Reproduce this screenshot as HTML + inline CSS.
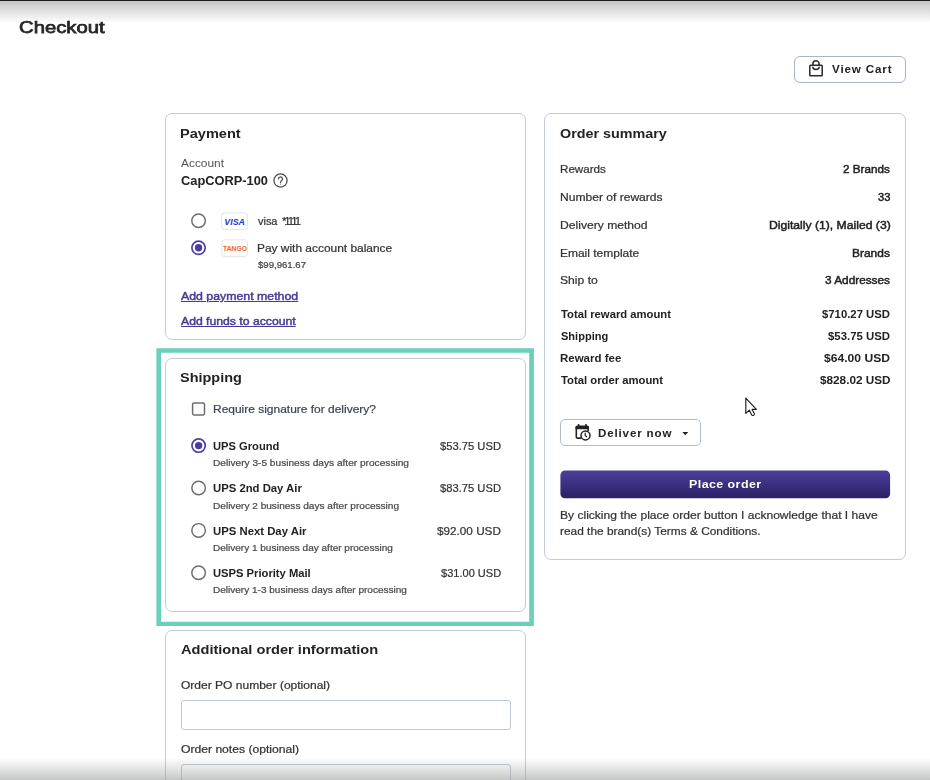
<!DOCTYPE html>
<html lang="en"><head><meta charset="utf-8"><title>Checkout</title>
<style>
*{box-sizing:border-box;margin:0;padding:0}
html,body{width:930px;height:780px;overflow:hidden;background:#fff}
body{position:relative;font-family:"Liberation Sans",sans-serif}
.t{position:absolute;white-space:nowrap;line-height:20px;transform-origin:0 0}
.a{position:absolute}
.card{position:absolute;border:1px solid #c4cbd6;border-radius:7px;background:#fff}
.inp{position:absolute;border:1px solid #c0c7d1;border-radius:3px;background:#fff}
</style></head>
<body>

<div class="a" style="left:0;top:0;width:930px;height:23px;background:linear-gradient(#c2c2c2,#fff)"></div>
<div class="a" style="left:0;top:0;width:930px;height:1px;background:#1c1c1c"></div>

<div class="a" style="left:794px;top:56px;width:112px;height:27px;border:1px solid #aab4c5;border-radius:6px;background:#fff"></div>
<svg class="a" style="left:808px;top:60px" width="16" height="17" viewBox="0 0 16 17" fill="none" stroke="#2a2a2a" stroke-width="1.5" stroke-linejoin="round" stroke-linecap="round"><path d="M2.6 5.3h10.8a.8.8 0 0 1 .8.8v8.9a.8.8 0 0 1-.8.8H2.6a.8.8 0 0 1-.8-.8V6.1a.8.8 0 0 1 .8-.8z"/><path d="M4.9 5.3V3.9a3.1 3.1 0 0 1 6.2 0v1.4"/><path d="M4.9 7.3a3.1 2.2 0 0 0 6.2 0"/></svg>

<div class="card" style="left:165px;top:113px;width:361px;height:227px"></div>
<svg class="a" style="left:272.7px;top:172.9px" width="15" height="15" viewBox="0 0 15 15" fill="none" stroke="#444" stroke-width="1.2"><circle cx="7.5" cy="7.5" r="6.6"/><path d="M5.5 6a2 2 0 1 1 3 1.7c-.7.4-1 .8-1 1.6" stroke-linecap="round"/><circle cx="7.5" cy="11" r=".5" fill="#444" stroke="none"/></svg>

<svg class="a" style="left:0;top:340px" width="930" height="300" viewBox="0 340 930 300"><path d="M156.4 348.2H533.9V626H156.4z M161 352.8V621.7H529.2V352.8z" fill="#6bd0ba" fill-rule="evenodd"/></svg>
<div class="card" style="left:165px;top:358px;width:361px;height:254px"></div>

<div class="card" style="left:165px;top:630px;width:361px;height:200px"></div>
<div class="inp" style="left:180.5px;top:700px;width:330px;height:29.5px"></div>
<div class="inp" style="left:180.5px;top:764px;width:330px;height:60px"></div>

<div class="card" style="left:544px;top:113px;width:362px;height:447px"></div>
<div class="a" style="left:560px;top:419px;width:141px;height:27px;border:1px solid #b2bccb;border-radius:5px;background:#fff"></div>
<svg class="a" style="left:575px;top:424px" width="17" height="18" viewBox="0 0 17 18" fill="none" stroke="#222" stroke-width="1.6" stroke-linecap="round" stroke-linejoin="round"><path d="M5.6 14.1H2.3a1 1 0 0 1-1-1V3.4a1 1 0 0 1 1-1h9.8a1 1 0 0 1 1 1v3"/><path d="M1.3 2.9h11.8v1.5H1.3z" fill="#222"/><path d="M3.6 0.7v2M11 0.7v2"/><circle cx="10.5" cy="11.4" r="4.5" fill="#fff" stroke-width="1.5"/><path d="M10.2 9v2.6l1.5 1.1" stroke-width="1.2"/></svg>
<svg class="a" style="left:682px;top:431.5px" width="7" height="4" viewBox="0 0 7 4"><path d="M0.3 0h6L3.3 3.2z" fill="#222"/></svg>
<svg class="a" style="left:555px;top:465px" width="340" height="40" viewBox="555 465 340 40"><defs><linearGradient id="pg" x1="0" y1="0" x2="0" y2="1"><stop offset="0" stop-color="#4b3f9c"/><stop offset="1" stop-color="#2a2064"/></linearGradient></defs><rect x="560.4" y="470.6" width="329.7" height="27.6" rx="4.5" fill="url(#pg)"/></svg>
<svg class="a" style="left:744px;top:396px" width="15" height="22" viewBox="0 0 15 22"><path d="M1.8 2.2V17.3l3.5-3.2 2.4 4.9q.5.8 1.4.4l.8-.4q.8-.5.4-1.400L8.100 13.400h4.300z" fill="#fff" stroke="#1d1d26" stroke-width="1.15" stroke-linejoin="round"/></svg>
<svg class="a" style="left:0;top:0" width="930" height="780" viewBox="0 0 930 780"><circle cx="198.55" cy="220.7" r="6.775" fill="#fff" stroke="#6b6b6b" stroke-width="1.45"/><circle cx="198.55" cy="247.8" r="6.65" fill="#fff" stroke="#4e43a0" stroke-width="1.7"/><circle cx="198.55" cy="247.8" r="3.7" fill="#4a3e9d"/><circle cx="198.6" cy="445.6" r="6.65" fill="#fff" stroke="#4e43a0" stroke-width="1.7"/><circle cx="198.6" cy="445.6" r="3.7" fill="#4a3e9d"/><circle cx="198.6" cy="488" r="6.775" fill="#fff" stroke="#6b6b6b" stroke-width="1.45"/><circle cx="198.6" cy="530.4" r="6.775" fill="#fff" stroke="#6b6b6b" stroke-width="1.45"/><circle cx="198.6" cy="572.7" r="6.775" fill="#fff" stroke="#6b6b6b" stroke-width="1.45"/><rect x="192.6" y="403" width="11.9" height="11.9" rx="1.3" fill="#fff" stroke="#6e6e6e" stroke-width="1.5"/><rect x="221.8" y="212.8" width="25.6" height="16.8" rx="2.8" fill="#fff" stroke="#e4e4e9" stroke-width="1"/><rect x="221.8" y="239.8" width="25.6" height="16.8" rx="2.8" fill="#fff" stroke="#e4e4e9" stroke-width="1"/><text x="224.3" y="224.8" font-family="Liberation Sans, sans-serif" font-size="9.6" font-weight="700" font-style="italic" fill="#1737cc" textLength="20.6" lengthAdjust="spacingAndGlyphs">VISA</text><text x="223" y="250.6" font-family="Liberation Sans, sans-serif" font-size="6.3" font-weight="700" fill="#f1632a" textLength="24" lengthAdjust="spacingAndGlyphs">TANGO</text></svg>
<div id="tx" style="position:absolute;left:0;top:0;width:930px;height:780px;will-change:transform">
<span class="t" style="left:18.58px;top:17.51px;font-size:17px;font-weight:400;color:#262626;transform:scaleX(1.1920);-webkit-text-stroke:0.75px #262626;">Checkout</span>
<span class="t" style="left:832.40px;top:59.19px;font-size:11px;font-weight:700;color:#222;letter-spacing:0.8px;transform:scaleX(1.0579);">View Cart</span>
<span class="t" style="left:180.03px;top:123.80px;font-size:13px;font-weight:700;color:#222;transform:scaleX(1.1200);">Payment</span>
<span class="t" style="left:181.00px;top:154.13px;font-size:10px;font-weight:400;color:#555;transform:scaleX(1.1898);-webkit-text-stroke:0;">Account</span>
<span class="t" style="left:181.00px;top:171.14px;font-size:12px;font-weight:700;color:#222;transform:scaleX(1.0691);">CapCORP-100</span>
<span class="t" style="left:258.00px;top:211.19px;font-size:11px;font-weight:400;color:#333;transform:scaleX(0.9917);-webkit-text-stroke:0.22px #333;">visa</span>
<span class="t" style="left:282.20px;top:211.19px;font-size:11px;font-weight:400;color:#333;letter-spacing:-2.0px;transform:scaleX(1.0391);-webkit-text-stroke:0.22px #333;">*1111</span>
<span class="t" style="left:257.34px;top:238.19px;font-size:11px;font-weight:400;color:#333;transform:scaleX(1.0839);-webkit-text-stroke:0.22px #333;">Pay with account balance</span>
<span class="t" style="left:258.00px;top:254.88px;font-size:9px;font-weight:400;color:#444;transform:scaleX(1.0656);-webkit-text-stroke:0.22px #444;">$99,961.67</span>
<span class="t" style="left:181.04px;top:286.39px;font-size:11px;font-weight:400;color:#463c96;transform:scaleX(1.1203);-webkit-text-stroke:0.45px #463c96;text-decoration:underline;text-decoration-thickness:1px;text-underline-offset:0.6px;">Add payment method</span>
<span class="t" style="left:181.22px;top:310.99px;font-size:11px;font-weight:400;color:#463c96;transform:scaleX(1.1096);-webkit-text-stroke:0.45px #463c96;text-decoration:underline;text-decoration-thickness:1px;text-underline-offset:0.6px;">Add funds to account</span>
<span class="t" style="left:180.13px;top:367.50px;font-size:13px;font-weight:700;color:#222;transform:scaleX(1.1127);">Shipping</span>
<span class="t" style="left:213.08px;top:399.19px;font-size:11px;font-weight:400;color:#3d4654;transform:scaleX(1.0875);-webkit-text-stroke:0.22px #3d4654;">Require signature for delivery?</span>
<span class="t" style="left:213.34px;top:436.19px;font-size:11px;font-weight:700;color:#222;transform:scaleX(1.0149);">UPS Ground</span>
<span class="t" style="left:440.00px;top:436.19px;font-size:11px;font-weight:400;color:#333;transform:scaleX(1.0177);-webkit-text-stroke:0.22px #333;">$53.75 USD</span>
<span class="t" style="left:213.20px;top:453.28px;font-size:9px;font-weight:400;color:#4a4a4a;transform:scaleX(1.1257);-webkit-text-stroke:0.22px #4a4a4a;">Delivery 3-5 business days after processing</span>
<span class="t" style="left:213.16px;top:477.52px;font-size:11px;font-weight:700;color:#222;transform:scaleX(1.0282);">UPS 2nd Day Air</span>
<span class="t" style="left:440.00px;top:477.52px;font-size:11px;font-weight:400;color:#333;transform:scaleX(1.0177);-webkit-text-stroke:0.22px #333;">$83.75 USD</span>
<span class="t" style="left:213.13px;top:495.61px;font-size:9px;font-weight:400;color:#4a4a4a;transform:scaleX(1.1204);-webkit-text-stroke:0.22px #4a4a4a;">Delivery 2 business days after processing</span>
<span class="t" style="left:213.28px;top:520.85px;font-size:11px;font-weight:700;color:#222;transform:scaleX(1.0304);">UPS Next Day Air</span>
<span class="t" style="left:437.24px;top:520.85px;font-size:11px;font-weight:400;color:#333;transform:scaleX(1.0663);-webkit-text-stroke:0.22px #333;">$92.00 USD</span>
<span class="t" style="left:213.41px;top:537.94px;font-size:9px;font-weight:400;color:#4a4a4a;transform:scaleX(1.1127);-webkit-text-stroke:0.22px #4a4a4a;">Delivery 1 business day after processing</span>
<span class="t" style="left:213.17px;top:563.18px;font-size:11px;font-weight:700;color:#222;transform:scaleX(1.0181);">USPS Priority Mail</span>
<span class="t" style="left:440.80px;top:563.18px;font-size:11px;font-weight:400;color:#333;transform:scaleX(1.0043);-webkit-text-stroke:0.22px #333;">$31.00 USD</span>
<span class="t" style="left:213.41px;top:580.27px;font-size:9px;font-weight:400;color:#4a4a4a;transform:scaleX(1.1138);-webkit-text-stroke:0.22px #4a4a4a;">Delivery 1-3 business days after processing</span>
<span class="t" style="left:181.00px;top:639.50px;font-size:13px;font-weight:700;color:#222;transform:scaleX(1.1236);">Additional order information</span>
<span class="t" style="left:181.00px;top:675.36px;font-size:10.5px;font-weight:400;color:#333;transform:scaleX(1.1449);-webkit-text-stroke:0.22px #333;">Order PO number (optional)</span>
<span class="t" style="left:181.00px;top:739.36px;font-size:10.5px;font-weight:400;color:#333;transform:scaleX(1.1553);-webkit-text-stroke:0.22px #333;">Order notes (optional)</span>
<span class="t" style="left:560.19px;top:123.80px;font-size:13px;font-weight:700;color:#222;transform:scaleX(1.1032);">Order summary</span>
<span class="t" style="left:560.12px;top:159.26px;font-size:10.8px;font-weight:400;color:#333;transform:scaleX(1.0774);-webkit-text-stroke:0.22px #333;">Rewards</span>
<span class="t" style="left:843.24px;top:159.19px;font-size:11px;font-weight:400;color:#222;transform:scaleX(1.0626);-webkit-text-stroke:0.45px #222;">2 Brands</span>
<span class="t" style="left:560.25px;top:187.11px;font-size:10.8px;font-weight:400;color:#333;transform:scaleX(1.1171);-webkit-text-stroke:0.22px #333;">Number of rewards</span>
<span class="t" style="left:877.60px;top:187.04px;font-size:11px;font-weight:400;color:#222;transform:scaleX(1.0122);-webkit-text-stroke:0.45px #222;">33</span>
<span class="t" style="left:560.24px;top:214.96px;font-size:10.8px;font-weight:400;color:#333;transform:scaleX(1.1226);-webkit-text-stroke:0.22px #333;">Delivery method</span>
<span class="t" style="left:768.69px;top:214.89px;font-size:11px;font-weight:400;color:#222;transform:scaleX(1.1063);-webkit-text-stroke:0.45px #222;">Digitally (1), Mailed (3)</span>
<span class="t" style="left:560.33px;top:242.81px;font-size:10.8px;font-weight:400;color:#333;transform:scaleX(1.1092);-webkit-text-stroke:0.22px #333;">Email template</span>
<span class="t" style="left:852.15px;top:242.74px;font-size:11px;font-weight:400;color:#222;transform:scaleX(1.0864);-webkit-text-stroke:0.45px #222;">Brands</span>
<span class="t" style="left:560.08px;top:269.66px;font-size:10.8px;font-weight:400;color:#333;transform:scaleX(1.1250);-webkit-text-stroke:0.22px #333;">Ship to</span>
<span class="t" style="left:825.00px;top:269.59px;font-size:11px;font-weight:400;color:#222;transform:scaleX(1.0735);-webkit-text-stroke:0.45px #222;">3 Addresses</span>
<span class="t" style="left:561.00px;top:303.76px;font-size:10.5px;font-weight:700;color:#222;transform:scaleX(1.0733);">Total reward amount</span>
<span class="t" style="left:822.24px;top:303.76px;font-size:10.5px;font-weight:700;color:#222;transform:scaleX(1.0795);">$710.27 USD</span>
<span class="t" style="left:561.00px;top:325.56px;font-size:10.5px;font-weight:700;color:#222;transform:scaleX(1.0509);">Shipping</span>
<span class="t" style="left:828.00px;top:325.56px;font-size:10.5px;font-weight:700;color:#222;transform:scaleX(1.0839);">$53.75 USD</span>
<span class="t" style="left:560.25px;top:348.36px;font-size:10.5px;font-weight:700;color:#222;transform:scaleX(1.0936);">Reward fee</span>
<span class="t" style="left:824.24px;top:348.36px;font-size:10.5px;font-weight:700;color:#222;transform:scaleX(1.1543);">$64.00 USD</span>
<span class="t" style="left:561.00px;top:370.16px;font-size:10.5px;font-weight:700;color:#222;transform:scaleX(1.0749);">Total order amount</span>
<span class="t" style="left:820.00px;top:370.16px;font-size:10.5px;font-weight:700;color:#222;transform:scaleX(1.1199);">$828.02 USD</span>
<span class="t" style="left:598.49px;top:422.79px;font-size:11px;font-weight:700;color:#222;letter-spacing:0.8px;transform:scaleX(1.0526);">Deliver now</span>
<span class="t" style="left:688.98px;top:474.02px;font-size:11.5px;font-weight:700;color:#fff;letter-spacing:0.4px;transform:scaleX(1.0824);">Place order</span>
<span class="t" style="left:560.07px;top:505.36px;font-size:10.8px;font-weight:400;color:#333;transform:scaleX(1.1168);-webkit-text-stroke:0.22px #333;">By clicking the place order button I acknowledge that I have</span>
<span class="t" style="left:560.40px;top:521.16px;font-size:10.8px;font-weight:400;color:#333;transform:scaleX(1.1007);-webkit-text-stroke:0.22px #333;">read the brand(s) Terms &amp; Conditions.</span>
</div>

<div class="a" style="left:0;top:758px;width:930px;height:22px;background:linear-gradient(rgba(155,158,158,0),rgba(150,153,153,.55));pointer-events:none"></div>

</body></html>
